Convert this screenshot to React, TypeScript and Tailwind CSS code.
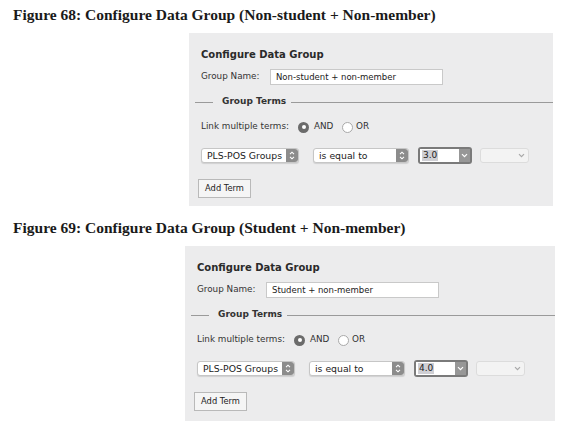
import React from 'react';

const ui = "font-['DejaVu_Sans',sans-serif]";

function Stepper() {
  return (
    <div className="flex h-full w-[12px] items-center justify-center rounded-r-[3px] bg-[#8c8c8c]">
      <svg width="6" height="9" viewBox="0 0 6 9" fill="none" stroke="white" strokeWidth="1.1">
        <path d="M1 3.2 L3 1.2 L5 3.2" />
        <path d="M1 5.8 L3 7.8 L5 5.8" />
      </svg>
    </div>
  );
}

function Select({ label, width }: { label: string; width: string }) {
  return (
    <div className={`flex h-[15px] items-center justify-between rounded-[3px] border border-[#c6c6c6] bg-white shadow-[0_1px_1px_rgba(0,0,0,0.12)] ${width}`}>
      <span className="pl-[5px] text-[9.3px] text-[#222]">{label}</span>
      <Stepper />
    </div>
  );
}

function Chevron({ color }: { color: string }) {
  return (
    <svg width="7" height="5" viewBox="0 0 7 5" fill="none" stroke={color} strokeWidth="1.2">
      <path d="M1 1.2 L3.5 3.7 L6 1.2" />
    </svg>
  );
}

function Radio({ on }: { on?: boolean }) {
  return on ? (
    <div className="flex h-[11px] w-[11px] items-center justify-center rounded-full bg-[#6b6b6b]">
      <div className="h-[4px] w-[4px] rounded-full bg-white" />
    </div>
  ) : (
    <div className="h-[11px] w-[11px] rounded-full border border-[#a9a9a9] bg-white" />
  );
}

function Panel({ name, value, box }: { name: string; value: string; box: string }) {
  return (
    <div className={`flex flex-col bg-[#ececed] pl-[12px] pt-[15px] text-[#333] ${ui} ${box}`}>
      <div className="h-[14px] text-[10px] font-bold leading-[14px] text-[#2a2a2a]">Configure Data Group</div>

      <div className="mt-[7px] flex h-[16px] items-center">
        <span className="w-[69px] text-[8.8px]">Group Name:</span>
        <div className="flex h-[16px] w-[173px] items-center border border-[#c9c9c9] bg-white pl-[5px] text-[8.5px] text-[#222]">
          {name}
        </div>
      </div>

      <div className="-ml-[6px] mt-[11px] flex h-[12px] items-center">
        <div className="h-px w-[18px] bg-[#9a9a9a]" />
        <span className="ml-[9px] text-[9px] font-bold text-[#333]">Group Terms</span>
        <div className="ml-[5px] h-px flex-1 bg-[#9a9a9a]" />
      </div>

      <div className="mt-[12px] flex h-[14px] items-center text-[8.8px]">
        <span className="w-[97px]">Link multiple terms:</span>
        <Radio on />
        <span className="ml-[5px] w-[28px] font-medium text-[#333]">AND</span>
        <Radio />
        <span className="ml-[3px] font-medium text-[#333]">OR</span>
      </div>

      <div className="mt-[13px] flex h-[17px] items-center">
        <Select label="PLS-POS Groups" width="w-[98px]" />
        <div className="w-[14px]" />
        <Select label="is equal to" width="w-[96px]" />
        <div className="ml-[9px] flex h-[17px] w-[54px] items-stretch rounded-[3px] bg-[#7a7a7a] p-[2px]">
          <div className="flex flex-1 items-center bg-white pl-[2px]">
            <span className="bg-[#cfcfd4] px-[1px] text-[9px] leading-[11px] text-[#222]">{value}</span>
          </div>
          <div className="flex w-[11px] items-center justify-center bg-[#979797]">
            <Chevron color="white" />
          </div>
        </div>
        <div className="ml-[8px] flex h-[15px] w-[49px] items-center justify-end rounded-[3px] border border-[#dcdcdc] bg-[#f3f3f3] pr-[3px]">
          <Chevron color="#a8a8a8" />
        </div>
      </div>

      <div className="-ml-[3px] mt-[15px] flex h-[19px] w-[53px] items-center justify-center border border-[#b9b9b9] bg-[#f5f5f5] text-[8.3px] text-[#222]">
        Add Term
      </div>
    </div>
  );
}

export default function App() {
  return (
    <div className="h-[427px] w-[561px] overflow-hidden bg-white">
      <h2 className="pl-[13px] pt-[6px] font-['Liberation_Serif',serif] text-[15.5px] font-bold leading-[18px] text-[#1a1a1a]">
        Figure 68: Configure Data Group (Non-student + Non-member)
      </h2>
      <Panel name="Non-student + non-member" value="3.0" box="ml-[189px] mt-[9px] h-[173px] w-[364px]" />
      <h2 className="pl-[13px] pt-[13px] font-['Liberation_Serif',serif] text-[15.5px] font-bold leading-[18px] text-[#1a1a1a]">
        Figure 69: Configure Data Group (Student + Non-member)
      </h2>
      <Panel name="Student + non-member" value="4.0" box="ml-[185px] mt-[9px] h-[175px] w-[370px]" />
    </div>
  );
}
